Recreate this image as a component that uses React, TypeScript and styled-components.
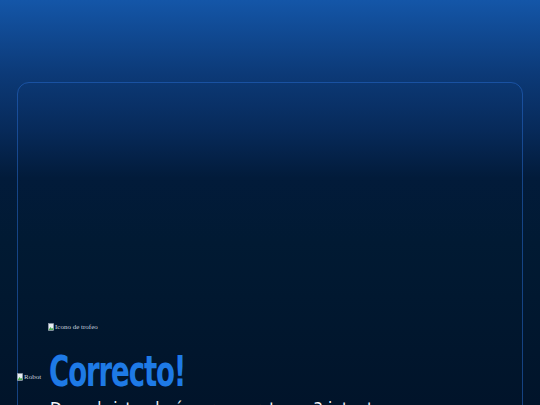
import React from "react";
import styled, { createGlobalStyle } from "styled-components";

const GlobalStyle = createGlobalStyle`
  html, body {
    margin: 0;
    padding: 0;
    background: #01142a;
  }
`;

const Page = styled.main`
  width: 540px;
  height: 405px;
  overflow: hidden;
  box-sizing: border-box;
  padding: 82px 17px 0 17px;
  background: linear-gradient(
    180deg,
    #1456a8 0%,
    #0c3a78 18%,
    #072a5a 32%,
    #021b3a 44%,
    #011a33 60%,
    #01142a 100%
  );
`;

const Card = styled.section`
  height: 400px;
  box-sizing: border-box;
  border: 1px solid rgba(38, 104, 200, 0.55);
  border-radius: 12px;
  padding-top: 234px;
  display: flex;
  flex-direction: column;
`;

const BrokenImage = styled.span<{ $drop?: number }>`
  display: inline-flex;
  align-items: center;
  gap: 1px;
  margin-top: ${(p) => p.$drop ?? 0}px;
  font-family: "Liberation Serif", serif;
  font-size: 7px;
  color: #c9d3df;
  line-height: 10px;
`;

const BrokenIcon = () => (
  <svg width="6" height="8" viewBox="0 0 7 9">
    <rect x="0.5" y="0.5" width="6" height="8" fill="#e8eef4" stroke="#9aa6b2" strokeWidth="0.6" />
    <path d="M1 7.5 L3 4.5 L4.5 6.5 L6 5.5 V8 H1 Z" fill="#4caf50" />
  </svg>
);

const TrophyRow = styled.div`
  padding-left: 30px;
  height: 14px;
`;

const HeadingRow = styled.div`
  display: flex;
  align-items: center;
  gap: 8px;
  margin-top: 19px;
  margin-left: -1px;
`;

const Heading = styled.h1`
  margin: 0;
  font-family: "DejaVu Sans Condensed", "DejaVu Sans", sans-serif;
  font-weight: 700;
  font-size: 42px;
  letter-spacing: -1.5px;
  line-height: 44px;
  color: #1e7ae6;
  transform: scaleX(0.73);
  transform-origin: left center;
`;

const Message = styled.p`
  margin: 5px 0 0 32px;
  font-family: "DejaVu Sans Condensed", "DejaVu Sans", sans-serif;
  font-size: 17px;
  color: #f2f5f9;
  white-space: nowrap;
`;

function App() {
  return (
    <>
      <GlobalStyle />
      <Page>
        <Card>
          <TrophyRow>
            <BrokenImage>
              <BrokenIcon />
              Icono de trofeo
            </BrokenImage>
          </TrophyRow>
          <HeadingRow>
            <BrokenImage $drop={10}>
              <BrokenIcon />
              Robot
            </BrokenImage>
            <Heading>Correcto!</Heading>
          </HeadingRow>
          <Message>Descubriste el número secreto en 3 intentos</Message>
        </Card>
      </Page>
    </>
  );
}

export default App;
